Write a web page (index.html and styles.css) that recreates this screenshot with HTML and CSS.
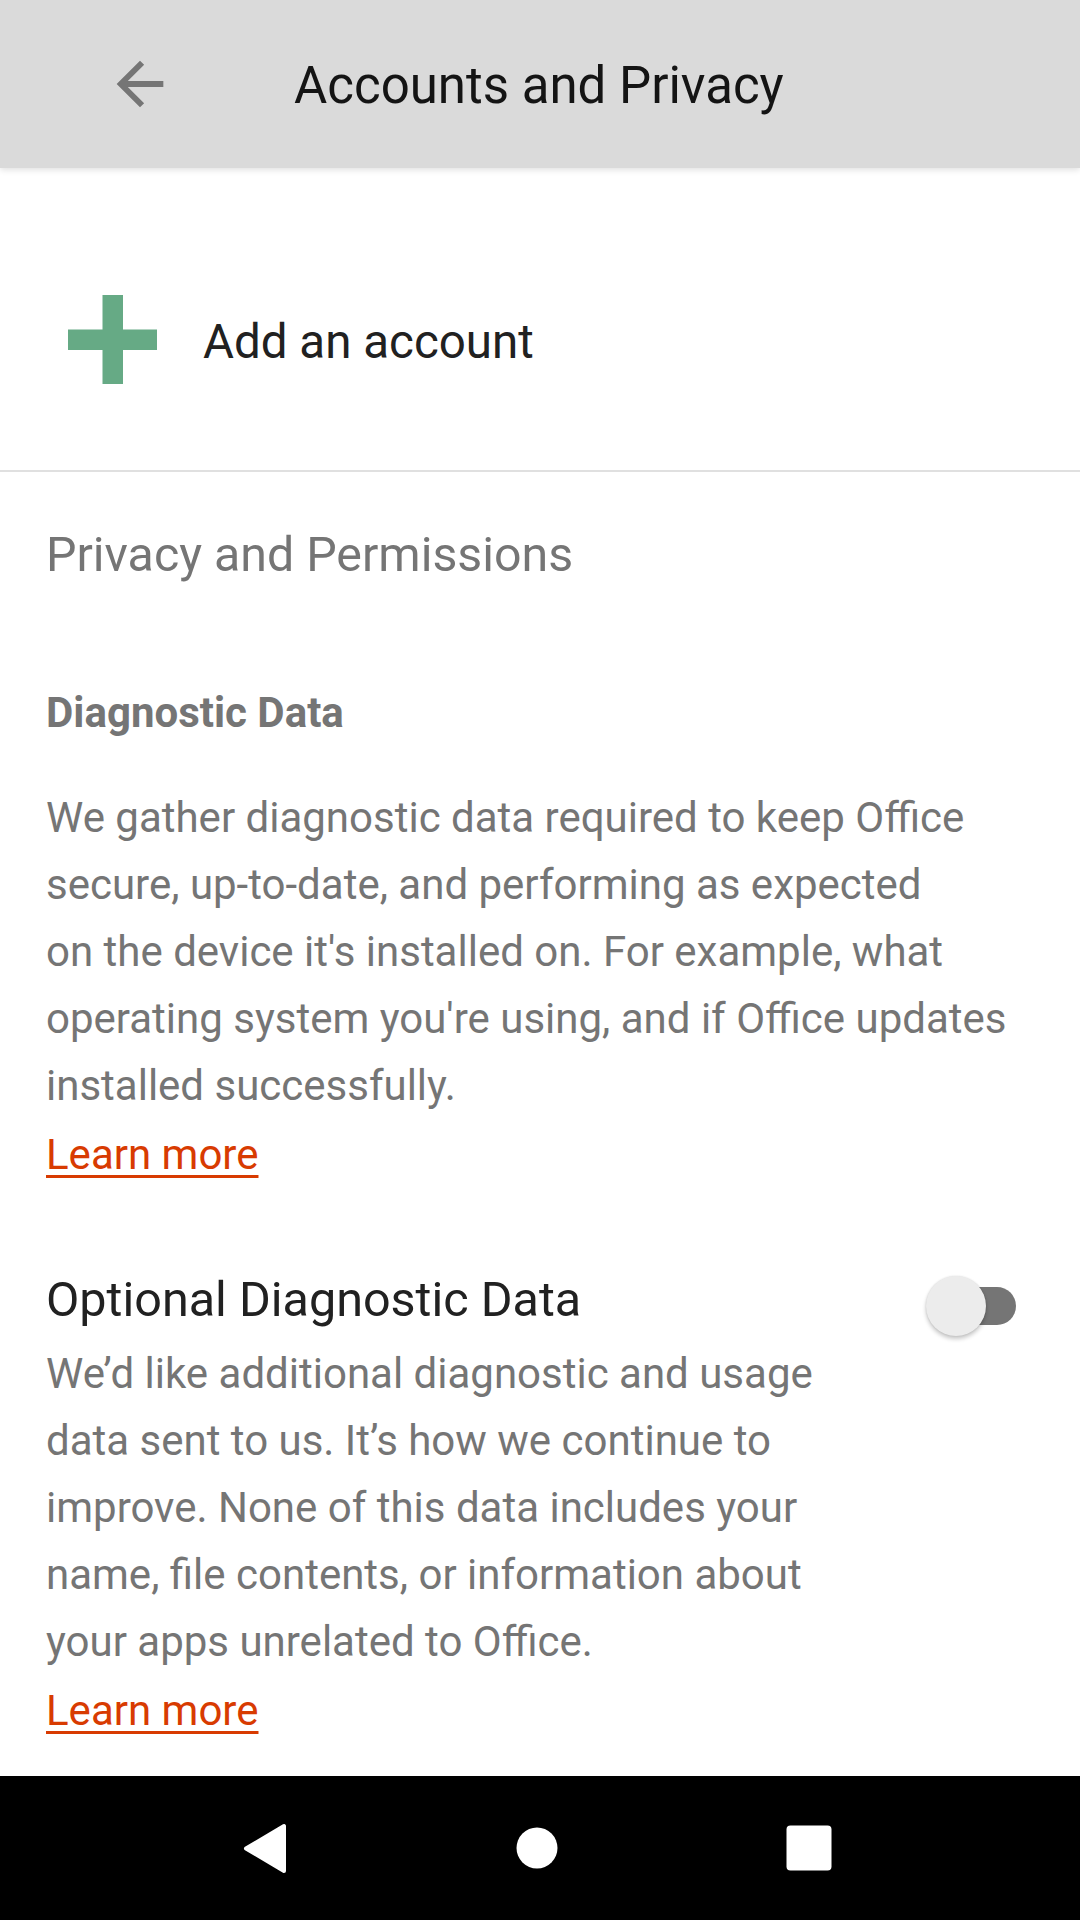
FILE: index.html
```html
<!DOCTYPE html>
<html lang="en">
<head>
<meta charset="utf-8">
<title>Accounts and Privacy</title>
<link rel="stylesheet" href="styles.css">
</head>
<body>
<div class="screen">
  <header class="appbar">
    <svg class="back" viewBox="0 0 24 24" width="70" height="70" aria-hidden="true">
      <path d="M20 11H7.83l5.59-5.59L12 4l-8 8 8 8 1.41-1.41L7.83 13H20v-2z" fill="#757575"/>
    </svg>
    <h1 class="title">Accounts and Privacy</h1>
  </header>
  <main class="content">
    <div class="add-row">
      <svg class="plus" viewBox="0 0 89 89" width="89" height="89" aria-hidden="true">
        <rect x="34.5" y="0" width="20.5" height="89" fill="#66AA85"/>
        <rect x="0" y="34.5" width="89" height="20.5" fill="#66AA85"/>
      </svg>
      <span class="add-label">Add an account</span>
    </div>
    <section class="privacy">
      <h2 class="section-title">Privacy and Permissions</h2>
      <h3 class="sub-title">Diagnostic Data</h3>
      <p class="body-text">We gather diagnostic data required to keep Office<br>secure, up-to-date, and performing as expected<br>on the device it's installed on. For example, what<br>operating system you're using, and if Office updates<br>installed successfully.</p>
      <a class="learn" href="#">Learn more</a>
      <div class="option-row">
        <div class="option-text">
          <div class="option-title">Optional Diagnostic Data</div>
          <p class="body-text">We’d like additional diagnostic and usage<br>data sent to us. It’s how we continue to<br>improve. None of this data includes your<br>name, file contents, or information about<br>your apps unrelated to Office.</p>
          <a class="learn" href="#">Learn more</a>
        </div>
        <div class="switch" role="switch" aria-checked="false">
          <span class="track"></span>
          <span class="thumb"></span>
        </div>
      </div>
    </section>
  </main>
  <nav class="navbar">
    <div class="nav-slot">
      <svg viewBox="0 0 44 51" width="44" height="51" aria-hidden="true">
        <path d="M41 3 L41 48 L3 25.5 Z" fill="#fff" stroke="#fff" stroke-width="4" stroke-linejoin="round"/>
      </svg>
    </div>
    <div class="nav-slot">
      <svg viewBox="0 0 42 42" width="42" height="42" aria-hidden="true">
        <circle cx="21" cy="21" r="20.5" fill="#fff"/>
      </svg>
    </div>
    <div class="nav-slot">
      <svg viewBox="0 0 46 46" width="46" height="46" aria-hidden="true">
        <rect x="0.5" y="0.5" width="45" height="45" rx="4" fill="#fff"/>
      </svg>
    </div>
  </nav>
</div>
</body>
</html>
```

FILE: styles.css
```css
* { box-sizing: border-box; }
html, body { margin: 0; padding: 0; }
body {
  width: 1080px;
  height: 1920px;
  overflow: hidden;
  background: #fff;
  font-family: Roboto, "Noto Sans", "Liberation Sans", sans-serif;
}
.screen {
  width: 1080px;
  height: 1920px;
  display: flex;
  flex-direction: column;
}
.appbar {
  height: 168px;
  flex: 0 0 168px;
  background: #dadada;
  display: flex;
  align-items: center;
  padding-left: 105px;
  position: relative;
  z-index: 2;
  box-shadow: 0 2px 6px rgba(0, 0, 0, 0.12);
}
.back { display: block; flex: 0 0 auto; }
.title {
  margin: 0 0 0 119px;
  padding-top: 4px;
  font-size: 51px;
  line-height: 52px;
  font-weight: 400;
  color: #141414;
}
.content {
  flex: 1 1 auto;
  overflow: hidden;
}
.add-row {
  display: flex;
  align-items: center;
  padding: 127px 0 86px 68px;
  border-bottom: 2px solid #e0e0e0;
}
.plus { display: block; flex: 0 0 auto; }
.add-label {
  margin-left: 46px;
  padding-top: 4px;
  font-size: 47.5px;
  line-height: 60px;
  color: #212121;
}
.privacy {
  padding: 0 46px;
}
.section-title {
  margin: 53px 0 0;
  font-size: 48.3px;
  line-height: 60px;
  font-weight: 400;
  color: #757575;
}
.sub-title {
  margin: 103px 0 0;
  font-size: 42px;
  line-height: 50px;
  font-weight: 700;
  color: #757575;
}
.body-text {
  margin: 0;
  font-size: 42px;
  line-height: 67px;
  color: #757575;
}
.sub-title + .body-text { margin-top: 46px; }
.learn {
  display: block;
  margin-top: 2px;
  font-size: 42px;
  line-height: 67px;
  color: #D83B01;
  text-decoration: underline;
  text-decoration-thickness: 3px;
  text-underline-offset: 6px;
  width: max-content;
}
.option-row {
  display: flex;
  align-items: flex-start;
  margin-top: 82px;
}
.option-text { flex: 1 1 auto; }
.option-title {
  font-size: 48.5px;
  line-height: 60px;
  color: #212121;
}
.option-title + .body-text { margin-top: 10px; }
.switch {
  position: relative;
  flex: 0 0 90px;
  width: 90px;
  height: 60px;
  margin-top: 6px;
  margin-right: 18px;
}
.track {
  position: absolute;
  left: 12px;
  top: 11px;
  width: 78px;
  height: 38px;
  border-radius: 19px;
  background: #757575;
}
.thumb {
  position: absolute;
  left: 0;
  top: 0;
  width: 60px;
  height: 60px;
  border-radius: 50%;
  background: #ececec;
  box-shadow: 0 3px 4px rgba(0, 0, 0, 0.22), 0 0 2px rgba(0, 0, 0, 0.12);
}
.navbar {
  flex: 0 0 144px;
  height: 144px;
  background: #000;
  display: flex;
  justify-content: center;
  align-items: center;
  padding-right: 6px;
}
.nav-slot {
  width: 272px;
  display: flex;
  justify-content: center;
  align-items: center;
}
.nav-slot svg { display: block; }
```
